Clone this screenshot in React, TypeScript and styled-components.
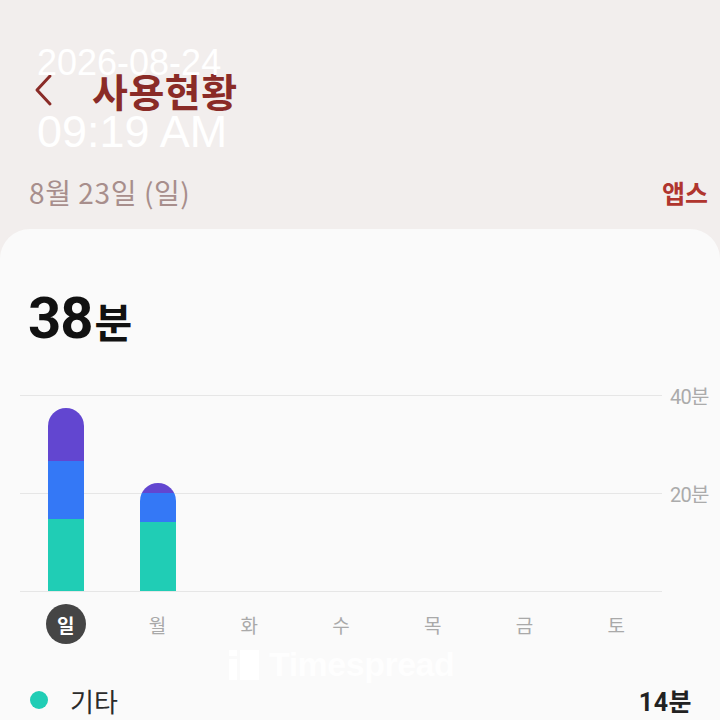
import React, { FC } from 'react';
import styled, { createGlobalStyle } from 'styled-components';

const GlobalStyle = createGlobalStyle`
  html, body {
    margin: 0;
    padding: 0;
    background: #f2eeed;
  }
  body {
    font-family: Roboto, "Noto Sans CJK KR", sans-serif;
    overflow: hidden;
  }
`;

const colors = {
  etc: '#20cdb5',
  blue: '#3478f6',
  purple: '#6246d0',
};

const MAX_MIN = 40;
const PLOT_H = 196;

interface DayData {
  label: string;
  segments: number[]; // minutes, bottom -> top
  selected?: boolean;
}

const days: DayData[] = [
  { label: '일', segments: [14.7, 11.8, 10.8], selected: true },
  { label: '월', segments: [14, 6.1, 1.9] },
  { label: '화', segments: [] },
  { label: '수', segments: [] },
  { label: '목', segments: [] },
  { label: '금', segments: [] },
  { label: '토', segments: [] },
];

const segColors = [colors.etc, colors.blue, colors.purple];

const Screen = styled.div`
  position: relative;
  width: 720px;
  height: 720px;
  overflow: hidden;
  background: #f2eeed;
  display: flex;
  flex-direction: column;
`;

const TopBar = styled.div`
  display: flex;
  align-items: center;
  height: 56px;
  margin-top: 62px;
  padding-left: 32px;
  gap: 38px;
`;

const BackButton = styled.div`
  width: 22px;
  height: 34px;
  display: flex;
  align-items: center;
`;

const Title = styled.h1`
  margin: 0;
  font-family: "Noto Sans CJK KR", sans-serif;
  font-size: 39px;
  font-weight: 700;
  color: #8a2b27;
  letter-spacing: 0.5px;
`;

const Stamp = styled.div`
  position: absolute;
  left: 37px;
  top: 45px;
  color: #ffffff;
  font-family: "Liberation Sans", Arial, sans-serif;
  line-height: 1;
  pointer-events: none;
`;

const StampDate = styled.div`
  font-size: 36px;
`;

const StampTime = styled.div`
  font-size: 45px;
  margin-top: 28px;
`;

const DateRow = styled.div`
  display: flex;
  align-items: center;
  justify-content: space-between;
  height: 50px;
  margin-top: 50px;
  padding: 0 12px 0 29px;
`;

const DateText = styled.span`
  font-family: "Noto Sans CJK KR", sans-serif;
  font-size: 28px;
  color: #a88e8c;
  letter-spacing: 0.6px;
`;

const AppsLink = styled.span`
  font-family: "Noto Sans CJK KR", sans-serif;
  font-size: 25px;
  font-weight: 700;
  color: #b0352e;
`;

const Card = styled.div`
  position: relative;
  flex: 1;
  margin-top: 14px;
  background: #fafafa;
  border-radius: 30px 30px 0 0;
`;

const Total = styled.div`
  display: flex;
  align-items: baseline;
  padding: 57px 0 0 28px;
  line-height: 64px;
  color: #111;
`;

const TotalNum = styled.span`
  font-family: Roboto, sans-serif;
  font-size: 58px;
  font-weight: 700;
  letter-spacing: -1px;
`;

const TotalUnit = styled.span`
  font-family: "Noto Sans CJK KR", sans-serif;
  font-size: 41px;
  font-weight: 700;
  margin-left: 2px;
`;

const Chart = styled.div`
  display: grid;
  grid-template-columns: 642px 1fr;
  margin-top: 43px;
  padding-left: 20px;
`;

const Plot = styled.div`
  position: relative;
  height: ${PLOT_H}px;
  display: grid;
  grid-template-columns: repeat(7, 1fr);
  align-items: end;
`;

const GridLine = styled.div<{ $top: number }>`
  position: absolute;
  left: 0;
  right: 0;
  top: ${(p) => p.$top}%;
  height: 1px;
  background: #e6e6e6;
`;

const Axis = styled.div`
  position: relative;
  height: ${PLOT_H}px;
`;

const AxisLabel = styled.span<{ $top: number }>`
  position: absolute;
  left: 8px;
  top: calc(${(p) => p.$top}% - 14px);
  font-family: Roboto, "Noto Sans CJK KR", sans-serif;
  font-size: 20px;
  color: #ababab;
  letter-spacing: -0.8px;
`;

const BarSlot = styled.div`
  display: flex;
  justify-content: center;
  position: relative;
  z-index: 1;
`;

const Bar = styled.div`
  width: 36px;
  display: flex;
  flex-direction: column-reverse;
  border-radius: 18px 18px 0 0;
  overflow: hidden;
`;

const Segment = styled.div<{ $color: string }>`
  background: ${(p) => p.$color};
`;

const DayRow = styled.div`
  display: grid;
  grid-template-columns: repeat(7, 1fr);
  width: 642px;
  margin: 13px 0 0 20px;
`;

const Day = styled.div<{ $selected?: boolean }>`
  justify-self: center;
  width: 40px;
  height: 40px;
  border-radius: 50%;
  display: flex;
  align-items: center;
  justify-content: center;
  font-family: "Noto Sans CJK KR", sans-serif;
  font-size: 19px;
  font-weight: ${(p) => (p.$selected ? 700 : 400)};
  color: ${(p) => (p.$selected ? '#ffffff' : '#a9a9a9')};
  background: ${(p) => (p.$selected ? '#454545' : 'transparent')};
`;

const LegendRow = styled.div`
  display: flex;
  align-items: center;
  margin-top: 36px;
  padding: 0 28px 0 30px;
  height: 40px;
`;

const Dot = styled.span<{ $color: string }>`
  width: 18px;
  height: 18px;
  border-radius: 50%;
  background: ${(p) => p.$color};
  margin-right: 22px;
`;

const LegendName = styled.span`
  flex: 1;
  font-family: "Noto Sans CJK KR", sans-serif;
  font-size: 26px;
  color: #2b2b2b;
`;

const LegendValue = styled.span`
  font-family: Roboto, "Noto Sans CJK KR", sans-serif;
  font-size: 25px;
  font-weight: 700;
  color: #222;
  letter-spacing: 0.5px;
`;

const Watermark = styled.div`
  position: absolute;
  left: 229px;
  top: 645px;
  display: flex;
  align-items: center;
  gap: 10px;
  color: rgba(255, 255, 255, 0.85);
  font-family: "Liberation Sans", Arial, sans-serif;
  font-size: 34px;
  font-weight: 700;
  letter-spacing: -0.5px;
  pointer-events: none;
  z-index: 2;
`;

const BackIcon: FC = () => (
  <svg width="22" height="34" viewBox="0 0 22 34" fill="none">
    <path d="M18 3 L5 17 L18 31" stroke="#8a2b27" strokeWidth="3" strokeLinecap="round" strokeLinejoin="round" />
  </svg>
);

const LogoIcon: FC = () => (
  <svg width="30" height="30" viewBox="0 0 30 30">
    <rect x="0" y="0" width="8" height="6" fill="rgba(255,255,255,0.85)" />
    <rect x="0" y="9" width="8" height="21" fill="rgba(255,255,255,0.85)" />
    <rect x="11" y="0" width="19" height="30" fill="rgba(255,255,255,0.85)" />
  </svg>
);

const App: FC = () => (
  <>
    <GlobalStyle />
    <Screen>
      <TopBar>
        <BackButton>
          <BackIcon />
        </BackButton>
        <Title>사용현황</Title>
      </TopBar>
      <DateRow>
        <DateText>8월 23일 (일)</DateText>
        <AppsLink>앱스</AppsLink>
      </DateRow>
      <Card>
        <Total>
          <TotalNum>38</TotalNum>
          <TotalUnit>분</TotalUnit>
        </Total>
        <Chart>
          <Plot>
            <GridLine $top={0} />
            <GridLine $top={50} />
            <GridLine $top={100} />
            {days.map((d) => (
              <BarSlot key={d.label}>
                {d.segments.length > 0 && (
                  <Bar>
                    {d.segments.map((m, i) => (
                      <Segment
                        key={i}
                        $color={segColors[i]}
                        style={{ height: (m / MAX_MIN) * PLOT_H }}
                      />
                    ))}
                  </Bar>
                )}
              </BarSlot>
            ))}
          </Plot>
          <Axis>
            <AxisLabel $top={0}>40분</AxisLabel>
            <AxisLabel $top={50}>20분</AxisLabel>
          </Axis>
        </Chart>
        <DayRow>
          {days.map((d) => (
            <Day key={d.label} $selected={d.selected}>
              {d.label}
            </Day>
          ))}
        </DayRow>
        <LegendRow>
          <Dot $color={colors.etc} />
          <LegendName>기타</LegendName>
          <LegendValue>14분</LegendValue>
        </LegendRow>
      </Card>
      <Stamp>
        <StampDate>2026-08-24</StampDate>
        <StampTime>09:19 AM</StampTime>
      </Stamp>
      <Watermark>
        <LogoIcon />
        Timespread
      </Watermark>
    </Screen>
  </>
);

export default App;
